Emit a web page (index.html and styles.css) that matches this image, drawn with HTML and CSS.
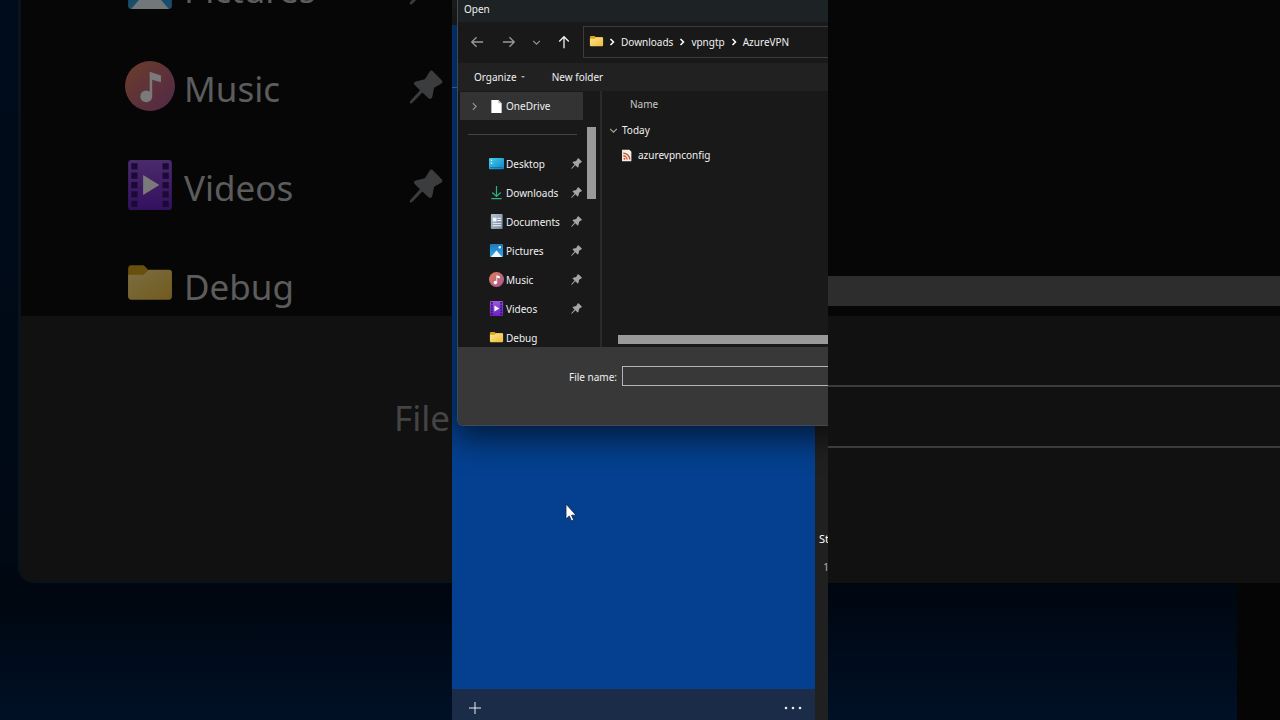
FILE: index.html
```html
<!DOCTYPE html>
<html lang="en">
<head>
<meta charset="utf-8">
<title>Open</title>
<link rel="stylesheet" href="styles.css">
</head>
<body>
<svg class="defs" aria-hidden="true">
  <defs>
    <linearGradient id="g-music" x1="0" y1="0" x2="1" y2="1"><stop offset="0" stop-color="#e08158"/><stop offset="1" stop-color="#a85295"/></linearGradient>
    <linearGradient id="g-video" x1="0" y1="0" x2="0" y2="1"><stop offset="0" stop-color="#9a58e0"/><stop offset="1" stop-color="#6a22c4"/></linearGradient>
    <linearGradient id="g-folder" x1="0" y1="0" x2="1" y2="1"><stop offset="0" stop-color="#ffe68c"/><stop offset="1" stop-color="#eebb3c"/></linearGradient>
    <linearGradient id="g-desk" x1="0" y1="0" x2="1" y2="1"><stop offset="0" stop-color="#3fd0ee"/><stop offset="1" stop-color="#1484c4"/></linearGradient>
    <linearGradient id="g-pic" x1="0" y1="0" x2="0" y2="1"><stop offset="0" stop-color="#1c78c0"/><stop offset="1" stop-color="#38a8e0"/></linearGradient>
    <linearGradient id="g-doc" x1="0" y1="0" x2="1" y2="1"><stop offset="0" stop-color="#b6c3d2"/><stop offset="1" stop-color="#74869a"/></linearGradient>
  </defs>
  <symbol id="music" viewBox="0 0 16 16"><circle cx="8" cy="8" r="8" fill="url(#g-music)"/><circle cx="6.8" cy="11.3" r="1.9" fill="#fff"/><path d="M7.9 3.4l3.6 1.2v2.2L8.7 6v5.3h-.8z" fill="#fff"/></symbol>
  <symbol id="video" viewBox="0 0 16 16"><rect x="1" width="14" height="16" rx="1" fill="url(#g-video)"/><path d="M2 1h2v2H2zM2 4h2v2H2zM2 7h2v2H2zM2 10h2v2H2zM2 13h2v2H2zM12 1h2v2h-2zM12 4h2v2h-2zM12 7h2v2h-2zM12 10h2v2h-2zM12 13h2v2h-2z" fill="#3a1470"/><path d="M5.8 4.8v6.4L11 8z" fill="#fff"/></symbol>
  <symbol id="folder" viewBox="0 0 16 16"><path d="M1 3.2q0-1.2 1-1.2h4l1.500 1.500H14q1 0 1 1V12H1z" fill="#d9a41c"/><path d="M1 5h5l1.600-1.600H14q1 0 1 1v7.600q0 1-1 1H2q-1 0-1-1z" fill="url(#g-folder)"/></symbol>
  <symbol id="desktop" viewBox="0 0 16 16"><rect y="2" width="16" height="12" rx="1" fill="url(#g-desk)"/><path d="M2 4h1.400v1.400H2zM2 7h1.400v1.400H2z" fill="#e6fbff"/><path d="M1 12h14v1H1z" fill="#0f6da8"/></symbol>
  <symbol id="download" viewBox="0 0 16 16"><path d="M8 1v11M3.500 8L8 12.300 12.500 8M2.500 14.500h11" fill="none" stroke="#2fae80" stroke-width="1.300"/></symbol>
  <symbol id="document" viewBox="0 0 16 16"><rect x="2" width="12.500" height="16" rx="1" fill="url(#g-doc)"/><path d="M4 4h4v4H4zM9 4h4v1H9zM9 6.500h4v1H9zM4 9.500h9v1H4zM4 12h9v1H4z" fill="#f4f8fc"/></symbol>
  <symbol id="picture" viewBox="0 0 16 16"><rect x="1" y="1" width="14" height="14" rx="1" fill="url(#g-pic)"/><path d="M2 15l6-7 6 7z" fill="#eef9ff"/><circle cx="11.500" cy="4.500" r="1.300" fill="#fff"/></symbol>
  <symbol id="page" viewBox="0 0 16 16"><path d="M2.500 1h7.500l3.500 3.500V15h-11z" fill="#fff"/><path d="M10 1v3.500h3.500z" fill="#bbb"/></symbol>
  <symbol id="feed" viewBox="0 0 16 16"><path d="M2.500 1h9l2.500 2.500V15H2.500z" fill="#f4eeea"/><circle cx="5.500" cy="12" r="1.300" fill="#c6532a"/><path d="M4 8.300a4.700 4.700 0 0 1 4.700 4.700M4 5a8 8 0 0 1 8 8" fill="none" stroke="#c6532a" stroke-width="1.600"/></symbol>
  <symbol id="pin" viewBox="0 0 16 16"><path d="M10 .4q.6-.3 1.200.2l4.200 4.200q.7.800-.1 1.500l-3.500 2.100-.8 4.100q-.5 1.800-1.800.8L6.300 10.600 1.700 15.300q-.6.600-1.200.500-.3-.7.200-1.300L5.200 9.500 2.600 6.900q-.8-1 .6-1.500L7.500 4.400z" fill="#a3a6a9"/></symbol>
  <symbol id="chev-r" viewBox="0 0 16 16"><path d="M5 2l6 6-6 6" fill="none" stroke="currentColor" stroke-width="2"/></symbol>
  <symbol id="sep" viewBox="0 0 8 8"><path d="M2.500 1l3 3-3 3" fill="none" stroke="#fff" stroke-width="1.500"/></symbol>
  <symbol id="chev-d" viewBox="0 0 16 16"><path d="M2 5l6 6 6-6" fill="none" stroke="currentColor" stroke-width="1.800"/></symbol>
  <symbol id="arrow-l" viewBox="0 0 16 16"><path d="M15 8H2M7.500 2.500L2 8l5.500 5.500" fill="none" stroke="currentColor" stroke-width="1.500"/></symbol>
</svg>

<main class="stage">
  <section class="backdrop backdrop-left" aria-hidden="true">
    <div class="big-dialog">
      <div class="big-list-wrap">
        <ul class="big-list">
          <li><svg><use href="#picture"/></svg><span>Pictures</span><svg class="big-pin"><use href="#pin"/></svg></li>
          <li><svg><use href="#music"/></svg><span>Music</span><svg class="big-pin"><use href="#pin"/></svg></li>
          <li><svg><use href="#video"/></svg><span>Videos</span><svg class="big-pin"><use href="#pin"/></svg></li>
          <li><svg><use href="#folder"/></svg><span>Debug</span></li>
        </ul>
      </div>
      <div class="big-footer"><span>File</span></div>
    </div>
  </section>

  <section class="phone">
    <div class="app">
      <div class="app-head"></div>
      <div class="app-strip"></div>
      <div class="app-canvas"></div>
      <footer class="app-bar">
        <button type="button" aria-label="Add"><svg class="ico14" viewBox="0 0 14 14"><path d="M7 1v12M1 7h12" stroke="#e8ecf2" stroke-width="1"/></svg></button>
        <button type="button" aria-label="More"><svg class="dots" viewBox="0 0 18 4"><circle cx="2" cy="2" r="1.300"/><circle cx="9" cy="2" r="1.300"/><circle cx="16" cy="2" r="1.300"/></svg></button>
      </footer>
    </div>
    <aside class="status"><span>St</span><span class="status-line">1</span></aside>

    <div class="dialog" role="dialog" aria-label="Open">
      <header class="title">Open</header>
      <nav class="nav">
        <button type="button" aria-label="Back" class="dim"><svg class="ico14"><use href="#arrow-l"/></svg></button>
        <button type="button" aria-label="Forward" class="dim"><svg class="ico14 flip"><use href="#arrow-l"/></svg></button>
        <button type="button" aria-label="Recent" class="dim"><svg class="ico9"><use href="#chev-d"/></svg></button>
        <button type="button" aria-label="Up"><svg class="ico14 up"><use href="#arrow-l"/></svg></button>
        <div class="path">
          <svg class="ico15"><use href="#folder"/></svg>
          <svg class="ico8"><use href="#sep"/></svg>
          <button type="button">Downloads</button>
          <svg class="ico8"><use href="#sep"/></svg>
          <button type="button">vpngtp</button>
          <svg class="ico8"><use href="#sep"/></svg>
          <button type="button">AzureVPN</button>
        </div>
      </nav>
      <div class="tools">
        <button type="button">Organize <i class="caret"></i></button>
        <button type="button">New folder</button>
      </div>
      <div class="body">
        <div class="side">
          <div class="tree">
            <div class="root"><svg class="ico9"><use href="#chev-r"/></svg><svg class="ico15"><use href="#page"/></svg><span>OneDrive</span></div>
            <hr>
            <ul class="quick">
              <li><svg class="ico15"><use href="#desktop"/></svg><span>Desktop</span><svg class="pin"><use href="#pin"/></svg></li>
              <li><svg class="ico15"><use href="#download"/></svg><span>Downloads</span><svg class="pin"><use href="#pin"/></svg></li>
              <li><svg class="ico15"><use href="#document"/></svg><span>Documents</span><svg class="pin"><use href="#pin"/></svg></li>
              <li><svg class="ico15"><use href="#picture"/></svg><span>Pictures</span><svg class="pin"><use href="#pin"/></svg></li>
              <li><svg class="ico15"><use href="#music"/></svg><span>Music</span><svg class="pin"><use href="#pin"/></svg></li>
              <li><svg class="ico15"><use href="#video"/></svg><span>Videos</span><svg class="pin"><use href="#pin"/></svg></li>
              <li><svg class="ico15"><use href="#folder"/></svg><span>Debug</span></li>
            </ul>
          </div>
          <div class="thumb"></div>
        </div>
        <div class="files">
          <div class="col-name">Name</div>
          <div class="group"><svg class="ico9"><use href="#chev-d"/></svg><span>Today</span></div>
          <div class="file"><svg class="ico13"><use href="#feed"/></svg><span>azurevpnconfig</span></div>
          <div class="hthumb"></div>
        </div>
      </div>
      <div class="foot">
        <label for="fname">File name:</label>
        <input id="fname" type="text">
      </div>
    </div>
    <svg class="cursor" viewBox="0 0 12 19"><path d="M1 1v15l3.300-3 2.200 5 2.200-1-2.200-4.800H11z" fill="#fff" stroke="#10233f" stroke-width=".8"/></svg>
  </section>

  <section class="backdrop backdrop-right" aria-hidden="true">
    <div class="r-files"><div class="r-thumb"></div></div>
    <div class="r-footer"><div class="r-field"></div></div>
    <div class="r-below"><div class="r-edge"></div></div>
  </section>
</main>
</body>
</html>
```
FILE: styles.css
```css
* { box-sizing: border-box; }
body { margin: 0; background: #000; font-family: "Noto Sans", "Open Sans", sans-serif; font-size: 10px; line-height: 16px; color: #f0f0f0; }
ul { list-style: none; margin: 0; padding: 0; }
button { background: none; border: 0; padding: 0; font: inherit; color: inherit; display: flex; align-items: center; }
svg { display: block; flex: none; }
.defs { position: absolute; width: 0; height: 0; }

.stage { display: grid; grid-template-columns: 1fr 376px 1fr; height: 100vh; min-height: 720px; overflow: hidden; }
.backdrop { overflow: hidden; display: flex; flex-direction: column; }

.backdrop-left { padding-left: 18px; background: linear-gradient(#000c1c 0, #000914 560px, #00060f 590px, #001026 720px); }
.big-dialog { background: #111; border: solid #0b121c; border-width: 0 0 2px 3px; border-bottom-left-radius: 16px; overflow: hidden; }
.big-list-wrap { height: 316px; overflow: hidden; background: #060606; }
.big-list { margin-top: -60px; }
.big-list li { display: flex; align-items: center; height: 99px; padding: 0 9px 0 104px; font-size: 35px; line-height: 48px; color: #5c5c5c; }
.big-list svg { width: 50px; height: 50px; margin: 0 9px 5px 0; filter: brightness(.48); }
.big-list .big-pin { width: 34px; height: 34px; margin: 0 0 4px auto; filter: brightness(.36); }
.big-footer { height: 265px; padding: 78px 0 0 373px; overflow: hidden; white-space: nowrap; font-size: 35px; line-height: 48px; color: #444; }

.phone { position: relative; display: flex; overflow: hidden; }
.app { flex: 1; display: flex; flex-direction: column; background: #04408f; }
.app-head { height: 25px; background: #202020; }
.app-strip { height: 63px; border-bottom: 1px solid #4b83c4; }
.app-canvas { flex: 1; }
.app-bar { height: 31px; display: flex; align-items: center; justify-content: space-between; padding: 6px 13px 0 16px; background: #1a2c48; }
.dots { width: 18px; height: 4px; fill: #e8ecf2; }
.status { width: 13px; background: #202020; padding: 530px 0 0 4px; overflow: hidden; font-size: 11px; line-height: 18px; display: flex; flex-direction: column; gap: 10px; color: #fff; }
.status-line { padding-left: 4px; color: #aaa; }

.dialog { position: absolute; top: 0; left: 5px; right: -20px; background: #191919; border: solid #3f4a58; border-width: 0 0 1px 1px; border-radius: 0 0 0 6px; overflow: hidden; box-shadow: 0 8px 32px 4px rgba(0, 0, 0, .6); }
.title { height: 22px; padding: 1px 6px; background: #1d2324; }
.nav { display: flex; align-items: center; height: 41px; padding: 0 0 1px 12px; }
.nav > button { margin-right: 18px; }
.nav .dim { color: #999; }
.nav .dim + .dim + .dim { margin: 0 16px 0 -2px; }
.path { flex: 1; display: flex; align-items: center; height: 32px; margin-right: 10px; padding-left: 5px; border: 1px solid #3c3c3c; }
.nav > .dim + button:not(.dim) { margin-right: 12px; }
.path > * + * { margin-left: 4px; }
.path > button + svg { margin-left: 5px; }
.path > svg + button { margin-left: 5px; }
.path > .ico15 { margin-bottom: 1px; }
.tools { display: flex; gap: 27px; height: 28px; padding-left: 16px; background: #212121; }
.caret { margin-left: 4px; border: 2px solid transparent; border-top-color: #aaa; border-bottom: 0; }
.body { display: flex; height: 256px; overflow: hidden; }
.side { display: flex; width: 144px; padding: 1px 4px 0 2px; border-right: 2px solid #2a2a2a; }
.tree { width: 124px; }
.root { display: flex; align-items: center; height: 28px; padding-left: 10px; background: #333; }
.root .ico9 { color: #999; margin-right: 10px; }
.root span, .quick span { margin-left: 2px; }
.tree hr { height: 1px; margin: 14px 6px 14px 8px; border: 0; background: #444; }
.quick li { display: flex; align-items: center; height: 29px; padding: 0 1px 0 29px; }
.pin { width: 11px; height: 11px; margin-left: auto; }
.thumb { width: 9px; height: 72px; margin: 35px 0 0 4px; background: #999; }
.files { flex: 1; display: flex; flex-direction: column; padding-left: 7px; }
.col-name { padding: 5px 0 0 21px; color: #c8c8c8; }
.group { display: flex; align-items: center; margin-top: 10px; gap: 4px; }
.group svg { color: #aaa; }
.file { display: flex; align-items: center; margin: 9px 0 0 11px; gap: 5px; }
.hthumb { height: 9px; margin: auto 0 3px 9px; background: #999; }
.foot { display: flex; align-items: flex-start; height: 78px; padding: 19px 0 0 110px; gap: 5px; background: #383838; }
.foot label { width: 49px; padding-top: 3px; white-space: nowrap; text-align: right; }
.foot input { flex: 1; min-width: 0; height: 20px; padding: 0 4px; border: 1px solid #b4b4b4; border-radius: 0; background: #383838; color: #fff; font: inherit; }
.cursor { position: absolute; left: 113px; top: 503px; width: 12px; height: 19px; }

.ico15 { width: 15px; height: 15px; }
.ico14 { width: 14px; height: 14px; }
.ico13 { width: 13px; height: 13px; }
.ico9 { width: 9px; height: 9px; }
.ico8 { width: 8px; height: 8px; }
.flip { transform: rotate(180deg); }
.up { transform: rotate(90deg); }

.r-files { height: 316px; display: flex; flex-direction: column; justify-content: flex-end; padding-bottom: 10px; background: #060606; }
.r-thumb { height: 30px; background: #2d2d2d; }
.r-footer { height: 267px; padding-top: 69px; background: #111; }
.r-field { height: 63px; border: solid #3c3c3c; border-width: 2px 0; }
.r-below { flex: 1; display: flex; justify-content: flex-end; background: linear-gradient(#00060f, #001026); }
.r-edge { width: 43px; background: #050505; }
```
